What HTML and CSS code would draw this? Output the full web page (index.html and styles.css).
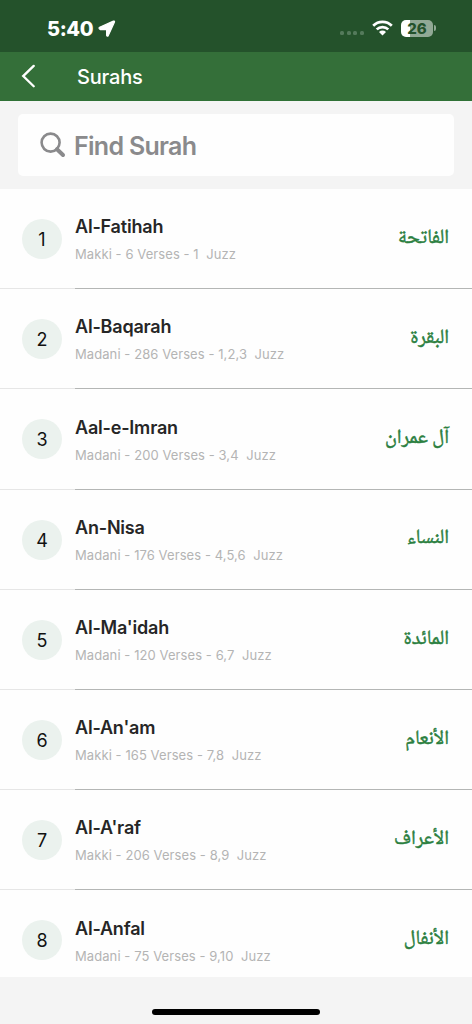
FILE: index.html
```html
<!DOCTYPE html>
<html lang="en">

<head>
    <meta charset="UTF-8">
    <meta name="viewport" content="width=device-width, initial-scale=1.0">
    <title>Surahs</title>
    <link rel="stylesheet" href="styles.css">
</head>

<body>
    <div class="app">
        <div class="status-bar">
            <div class="status-left">
                <span class="time">5:40</span>
                <svg class="location" width="18" height="17" viewBox="0 0 18 17">
                    <path d="M1.6 7.2 15.4 1.1Q17 .6 16.4 2.2L10.3 15.6Q9.3 17 8.6 15.3V9.6H2.2Q.2 8.3 1.6 7.2Z" fill="#fff" stroke="#fff" stroke-width="1.2" stroke-linejoin="round"/>
                </svg>
            </div>
            <div class="status-right">
                <div class="signal"><i></i><i></i><i></i><i></i></div>
                <svg class="wifi" width="21" height="16" viewBox="0 0 21 16">
                    <g fill="none" stroke="#fff" stroke-width="2.7">
                        <path d="M1.2 5.8A13.2 13.2 0 0 1 19.8 5.8"/>
                        <path d="M4.7 9.4A8.3 8.3 0 0 1 16.3 9.4"/>
                    </g>
                    <path d="M7 12A5.1 5.1 0 0 1 14 12L10.5 15.5Z" fill="#fff"/>
                </svg>
                <div class="battery"><span class="battery-level">26</span><i class="battery-cap"></i></div>
            </div>
        </div>

        <div class="header">
            <svg class="back" width="14" height="24" viewBox="0 0 14 24">
                <path d="M12.7 1.9 2.2 12.1 12.7 22.3" fill="none" stroke="#fff" stroke-width="2.3" stroke-linecap="round"/>
            </svg>
            <h1>Surahs</h1>
        </div>

        <div class="search">
            <div class="search-box">
                <svg width="26" height="26" viewBox="0 0 26 26" fill="none" stroke="#8a8a8c">
                    <circle cx="10.6" cy="10.6" r="9" stroke-width="2.6"/>
                    <path d="M17 17.2 23 23" stroke-width="4" stroke-linecap="round"/>
                </svg>
                <span>Find Surah</span>
            </div>
        </div>

        <div class="list">
            <div class="row">
                <div class="number">1</div>
                <div class="row-body">
                    <div>
                        <div class="name">Al-Fatihah</div>
                        <div class="info">Makki - 6 Verses - 1&nbsp; Juzz</div>
                    </div>
                    <div class="arabic" lang="ar" dir="rtl">الفاتحة</div>
                </div>
            </div>
            <div class="row">
                <div class="number">2</div>
                <div class="row-body">
                    <div>
                        <div class="name">Al-Baqarah</div>
                        <div class="info">Madani - 286 Verses - 1,2,3&nbsp; Juzz</div>
                    </div>
                    <div class="arabic" lang="ar" dir="rtl">البقرة</div>
                </div>
            </div>
            <div class="row">
                <div class="number">3</div>
                <div class="row-body">
                    <div>
                        <div class="name">Aal-e-Imran</div>
                        <div class="info">Madani - 200 Verses - 3,4&nbsp; Juzz</div>
                    </div>
                    <div class="arabic" lang="ar" dir="rtl">آل عمران</div>
                </div>
            </div>
            <div class="row">
                <div class="number">4</div>
                <div class="row-body">
                    <div>
                        <div class="name">An-Nisa</div>
                        <div class="info">Madani - 176 Verses - 4,5,6&nbsp; Juzz</div>
                    </div>
                    <div class="arabic" lang="ar" dir="rtl">النساء</div>
                </div>
            </div>
            <div class="row">
                <div class="number">5</div>
                <div class="row-body">
                    <div>
                        <div class="name">Al-Ma'idah</div>
                        <div class="info">Madani - 120 Verses - 6,7&nbsp; Juzz</div>
                    </div>
                    <div class="arabic" lang="ar" dir="rtl">المائدة</div>
                </div>
            </div>
            <div class="row">
                <div class="number">6</div>
                <div class="row-body">
                    <div>
                        <div class="name">Al-An'am</div>
                        <div class="info">Makki - 165 Verses - 7,8&nbsp; Juzz</div>
                    </div>
                    <div class="arabic" lang="ar" dir="rtl">الأنعام</div>
                </div>
            </div>
            <div class="row">
                <div class="number">7</div>
                <div class="row-body">
                    <div>
                        <div class="name">Al-A'raf</div>
                        <div class="info">Makki - 206 Verses - 8,9&nbsp; Juzz</div>
                    </div>
                    <div class="arabic" lang="ar" dir="rtl">الأعراف</div>
                </div>
            </div>
            <div class="row">
                <div class="number">8</div>
                <div class="row-body">
                    <div>
                        <div class="name">Al-Anfal</div>
                        <div class="info">Madani - 75 Verses - 9,10&nbsp; Juzz</div>
                    </div>
                    <div class="arabic" lang="ar" dir="rtl">الأنفال</div>
                </div>
            </div>
        </div>

        <div class="bottom">
            <div class="home-bar"></div>
        </div>
    </div>
</body>

</html>
```
FILE: styles.css
```css
* {
    box-sizing: border-box;
}

body {
    margin: 0;
    background-color: #f4f4f4;
    font-family: Inter, "Liberation Sans", sans-serif;
}

.app {
    height: 1024px;
    display: flex;
    flex-direction: column;
    overflow: hidden;
}

/* status bar */
.status-bar {
    height: 52px;
    flex: none;
    padding: 5px 36px 0 47px;
    display: flex;
    align-items: center;
    justify-content: space-between;
    background-color: #24522b;
    color: white;
}

.status-left,
.status-right {
    display: flex;
    align-items: center;
}

.time {
    font-size: 20px;
    font-weight: 800;
    line-height: 24px;
    letter-spacing: -0.4px;
}

.location {
    margin-left: 5px;
}

.signal {
    display: flex;
    gap: 2.7px;
    margin: 9px 8px 0 0;
}

.signal i {
    width: 4px;
    height: 4px;
    border-radius: 1.5px;
    background-color: #547a5b;
}

.wifi {
    margin: -2px 8px 0 0;
}

.battery {
    margin-top: -1px;
    display: flex;
    align-items: center;
    gap: 1px;
}

.battery-level {
    width: 32px;
    height: 17px;
    border-radius: 5px;
    background: linear-gradient(to right, #fff 27%, #91a995 27%);
    color: #24522b;
    font-size: 15px;
    font-weight: 800;
    line-height: 17px;
    text-align: center;
}

.battery-cap {
    width: 2px;
    height: 6px;
    border-radius: 0 2px 2px 0;
    background-color: #91a995;
}

/* header */
.header {
    height: 49px;
    flex: none;
    padding-left: 21px;
    display: flex;
    align-items: center;
    background-color: #346f39;
    border-bottom: 1px solid #2f7136;
    color: white;
}

h1 {
    margin: 1px 0 0 42px;
    font-size: 20px;
    font-weight: 500;
    line-height: 24px;
    letter-spacing: -0.2px;
}

/* search */
.search {
    height: 88px;
    flex: none;
    padding: 13px 18px;
}

.search-box {
    height: 62px;
    padding-left: 22px;
    display: flex;
    align-items: center;
    gap: 8px;
    border-radius: 5px;
    background-color: #fefefe;
    color: #8a8a8c;
    font-size: 25px;
    font-weight: 600;
    letter-spacing: -0.7px;
}

.search-box span {
    padding-top: 2px;
}

/* list */
.list {
    height: 788px;
    flex: none;
    overflow: hidden;
    background-color: #fefefe;
}

.row {
    height: 100.2px;
    padding-left: 22px;
    display: flex;
    align-items: center;
    background: linear-gradient(#e6e6e6, #e6e6e6) left bottom / 75px 1px no-repeat;
}

.number {
    width: 40px;
    height: 40px;
    margin-right: 13px;
    border-radius: 50%;
    background-color: #ebf2ee;
    color: #111;
    font-size: 18px;
    line-height: 41px;
    text-align: center;
}

.row-body {
    flex: 1;
    height: 100%;
    padding: 2.4px 23px 0 0;
    display: flex;
    align-items: center;
    justify-content: space-between;
    border-bottom: 1px solid #b4b6b5;
}

.name {
    color: #262626;
    font-size: 18px;
    font-weight: 600;
    line-height: 24px;
    letter-spacing: -0.2px;
}

.info {
    margin-top: 5px;
    color: #b4b4b4;
    font-size: 13px;
    line-height: 20px;
    letter-spacing: 0.08px;
}

.arabic {
    margin-top: -2px;
    color: #2b7f3f;
    font-family: "Noto Naskh Arabic", "DejaVu Sans Condensed", "DejaVu Sans", sans-serif;
    font-size: 20px;
    line-height: 24px;
    -webkit-text-stroke: 0.5px #2b7f3f;
}

/* bottom */
.bottom {
    flex: 1;
    display: flex;
    justify-content: center;
    padding-top: 32px;
}

.home-bar {
    width: 168px;
    height: 6px;
    border-radius: 3px;
    background-color: black;
}
```
